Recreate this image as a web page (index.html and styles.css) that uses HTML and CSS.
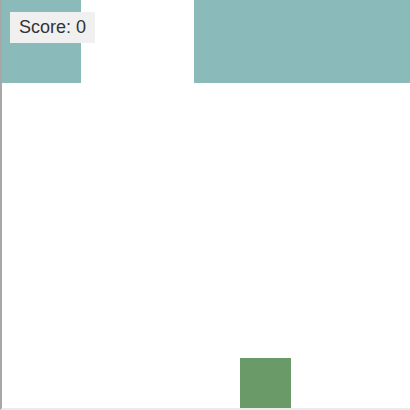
FILE: index.html
```html
<!DOCTYPE html>
<html>
<head>
<meta charset="utf-8">
<link rel="stylesheet" href="styles.css">
</head>
<body>
<div class="game">
  <div class="pipe pipe-a"></div>
  <div class="pipe pipe-b"></div>
  <div class="player"></div>
  <div class="score">Score: 0</div>
</div>
</body>
</html>
```
FILE: styles.css
```css
html, body {
  margin: 0;
  padding: 0;
  background: #fff;
}
.game {
  position: relative;
  width: 408px;
  height: 408px;
  border-left: 2px solid #a8a8a8;
  border-bottom: 2px solid #ebebeb;
  overflow: hidden;
}
.pipe {
  position: absolute;
  top: 0;
  height: 83px;
  background: #8abab9;
}
.pipe-a { left: 0; width: 79px; }
.pipe-b { left: 192px; width: 216px; }
.player {
  position: absolute;
  left: 238px;
  top: 358px;
  width: 51px;
  height: 50px;
  background: #699a67;
}
.score {
  position: absolute;
  left: 8px;
  top: 12px;
  padding: 6px 9px;
  background: #f0f0f0;
  color: #333;
  font-family: "Liberation Sans", Arial, sans-serif;
  font-size: 18px;
  line-height: 19px;
}
```
